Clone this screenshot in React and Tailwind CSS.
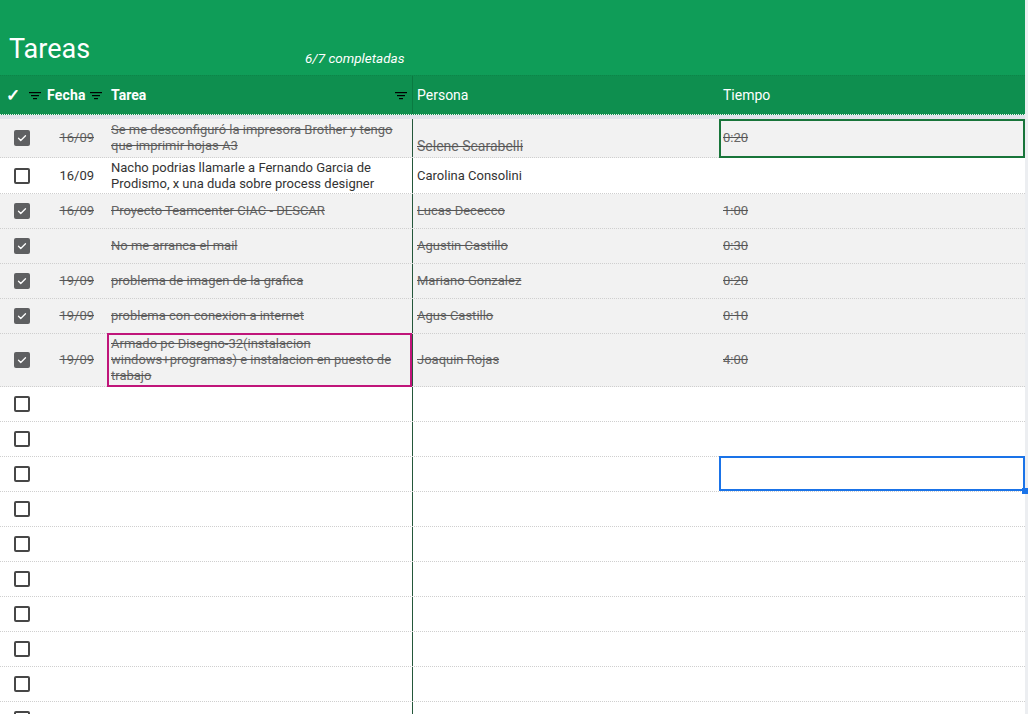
import React from "react";

const rows = [
  { done: true, fecha: "16/09", tarea: "Se me desconfiguró la impresora Brother y tengo que imprimir hojas A3", persona: "Selene Scarabelli", tiempo: "0:20", h: "h-[39px]", special: "selene" },
  { done: false, fecha: "16/09", tarea: "Nacho podrias llamarle a Fernando Garcia de Prodismo, x una duda sobre process designer", persona: "Carolina Consolini", tiempo: "", h: "h-[36px]" },
  { done: true, fecha: "16/09", tarea: "Proyecto Teamcenter CIAC - DESCAR", persona: "Lucas Dececco", tiempo: "1:00", h: "h-[35px]" },
  { done: true, fecha: "", tarea: "No me arranca el mail", persona: "Agustin Castillo", tiempo: "0:30", h: "h-[35px]" },
  { done: true, fecha: "19/09", tarea: "problema de imagen de la grafica", persona: "Mariano Gonzalez", tiempo: "0:20", h: "h-[35px]" },
  { done: true, fecha: "19/09", tarea: "problema con conexion a internet", persona: "Agus Castillo", tiempo: "0:10", h: "h-[35px]" },
  { done: true, fecha: "19/09", tarea: "Armado pc Disegno-32(instalacion windows+programas) e instalacion en puesto de trabajo", persona: "Joaquin Rojas", tiempo: "4:00", h: "h-[53px]", special: "magenta" },
];

function FilterIcon() {
  return (
    <svg width="12" height="9" viewBox="0 0 12 9" className="shrink-0">
      <rect x="0" y="1" width="12" height="1.2" fill="#000" />
      <rect x="2" y="4" width="8" height="1.2" fill="#000" />
      <rect x="4" y="7" width="4" height="1.2" fill="#000" />
    </svg>
  );
}

function Checkbox({ checked }) {
  if (checked) {
    return (
      <div className="w-4 h-4 rounded-[2px] bg-[#5f6062] flex items-center justify-center">
        <svg width="12" height="12" viewBox="0 0 24 24">
          <path d="M5 12.5l4.5 4.5L19 7.5" fill="none" stroke="#fff" strokeWidth="2.6" strokeLinecap="round" strokeLinejoin="round" />
        </svg>
      </div>
    );
  }
  return <div className="w-4 h-4 rounded-[2px] border-2 border-[#474747] bg-white" />;
}

function Row({ r }) {
  const bg = r.done ? "bg-[#f2f2f2]" : "bg-white";
  const txt = r.done ? "line-through text-[#666666] decoration-[#555555]" : "text-[#333333]";
  return (
    <div className={`grid grid-cols-[43px_62px_308px_306px_306px] ${r.h} ${bg} border-b border-dotted border-[#cfcfcf] text-[13px] leading-4`}>
      <div className="flex items-center justify-center pl-[1px]">
        <Checkbox checked={r.done} />
      </div>
      <div className={`flex items-center justify-end pr-[11px] ${txt}`}>{r.fecha}</div>
      <div className={`relative flex items-center pl-[6px] pr-[8px] border-r border-[#24573a] ${txt}`}>
        <span>{r.tarea}</span>
        {r.special === "magenta" && (
          <div className="absolute left-[2px] -top-[1px] right-0 -bottom-[1px] border-2 border-[#c0157a] pointer-events-none" />
        )}
      </div>
      <div className={`flex ${r.special === "selene" ? "items-end pb-[3px] text-[14px]" : "items-center"} pl-[4px] ${txt}`}>
        {r.persona}
      </div>
      <div className={`relative flex items-center pl-[4px] ${txt}`}>
        {r.tiempo}
        {r.special === "selene" && (
          <div className="absolute left-0 top-0 right-0 -bottom-[1px] border-2 border-[#18753a] pointer-events-none" />
        )}
      </div>
    </div>
  );
}

function EmptyRow({ selected }) {
  return (
    <div className="grid grid-cols-[43px_62px_308px_306px_306px] h-[35px] bg-white border-b border-dotted border-[#cfcfcf]">
      <div className="flex items-center justify-center pl-[1px]">
        <Checkbox checked={false} />
      </div>
      <div />
      <div className="border-r border-[#24573a]" />
      <div />
      <div className="relative">
        {selected && (
          <>
            <div className="absolute left-0 -top-[1px] right-0 bottom-0 border-2 border-[#1a73e8] pointer-events-none" />
            <div className="absolute -right-[3px] -bottom-[3px] w-[6px] h-[6px] bg-[#1a73e8]" />
          </>
        )}
      </div>
    </div>
  );
}

export default function App() {
  return (
    <div className="w-[1028px] h-[714px] overflow-hidden bg-[#eceef1] font-['Roboto','Liberation_Sans',sans-serif]">
      <div className="w-[1025px]">
        {/* Top bar */}
        <div className="h-[75px] bg-[#0f9d58] flex items-end pb-[10px]">
          <div className="w-[305px] pl-[9px] text-white text-[27px] leading-8">Tareas</div>
          <div className="text-white italic text-[13.5px] leading-4 -mb-[1px]">6/7 completadas</div>
        </div>
        {/* Header row */}
        <div className="grid grid-cols-[43px_62px_308px_306px_306px] h-[40px] bg-[#0e8f4f] border-t border-[#0c8548] border-b border-dotted border-b-[#e8f5ec] text-white text-[14px]">
          <div className="flex items-center pl-[6px] gap-[9px]">
            <span className="text-[17px] font-bold leading-none">✓</span>
            <FilterIcon />
          </div>
          <div className="flex items-center gap-[4px] pl-[4px] font-bold">
            <span className="tracking-[0.2px]">Fecha</span>
            <FilterIcon />
          </div>
          <div className="flex items-center justify-between pl-[6px] pr-[5px] font-bold border-r border-[#0a7a41]">
            <span>Tarea</span>
            <FilterIcon />
          </div>
          <div className="flex items-center pl-[4px]">Persona</div>
          <div className="flex items-center pl-[4px]">Tiempo</div>
        </div>
        <div className="h-[4px] bg-[#dfe3ea]" />
        {rows.map((r, i) => (
          <Row key={i} r={r} />
        ))}
        {Array.from({ length: 10 }).map((_, i) => (
          <EmptyRow key={i} selected={i === 2} />
        ))}
      </div>
    </div>
  );
}
